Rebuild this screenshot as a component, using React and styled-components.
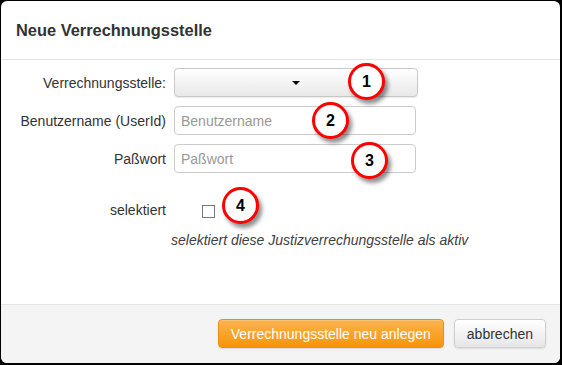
import React from 'react'
import styled, { createGlobalStyle } from 'styled-components'

const GlobalStyle = createGlobalStyle`
  html, body {
    margin: 0;
    padding: 0;
    background: #000;
  }
  * {
    box-sizing: border-box;
  }
`;

const CALLOUTS = [
  { n: '1', left: 347, top: 62 },
  { n: '2', left: 311, top: 101 },
  { n: '3', left: 350, top: 141 },
  { n: '4', left: 221, top: 186 },
];

export default function App() {
  return (
    <>
      <GlobalStyle />
      <Dialog>
        <Header>
          <Title>Neue Verrechnungsstelle</Title>
        </Header>

        <Body>
          <Form>
            <FormRow>
              <Label>Verrechnungsstelle:</Label>
              <SelectButton type="button">
                <Caret />
              </SelectButton>
            </FormRow>
            <FormRow>
              <Label>Benutzername (UserId)</Label>
              <TextInput placeholder="Benutzername" />
            </FormRow>
            <FormRow>
              <Label>Paßwort</Label>
              <TextInput placeholder="Paßwort" type="text" />
            </FormRow>
            <CheckRow>
              <Label>selektiert</Label>
              <Checkbox type="checkbox" />
            </CheckRow>
            <HelpRow>
              <span />
              <HelpText>selektiert diese Justizverrechungsstelle als aktiv</HelpText>
            </HelpRow>
          </Form>
        </Body>

        <Footer>
          <Button $primary>Verrechnungsstelle neu anlegen</Button>
          <Button>abbrechen</Button>
        </Footer>

        {CALLOUTS.map((c) => (
          <Callout key={c.n} style={{ left: c.left, top: c.top }}>
            {c.n}
          </Callout>
        ))}
      </Dialog>
    </>
  )
}

const Dialog = styled.div`
width: 559px;
height: 362px;
margin: 1px 2px 2px 1px;
background: #fff;
border-radius: 6px;
overflow: hidden;
position: relative;
display: flex;
flex-direction: column;
font-family: "Liberation Sans", Arial, sans-serif;
color: #333;
`;

const Header = styled.div`
height: 59px;
flex-shrink: 0;
display: flex;
align-items: center;
padding: 0 15px;
border-bottom: 1px solid #e5e5e5;
`;

const Title = styled.h3`
margin: 0;
font-size: 16.4px;
font-weight: bold;
color: #333;
`;

const Body = styled.div`
flex: 1;
padding: 8px 15px 0 15px;
`;

const Form = styled.div`
display: flex;
flex-direction: column;
gap: 9px;
`;

const FormRow = styled.div`
display: grid;
grid-template-columns: 150px 244px;
column-gap: 8px;
align-items: center;
height: 29px;
`;

const Label = styled.label`
text-align: right;
font-size: 14px;
color: #333;
`;

const SelectButton = styled.button`
height: 29px;
width: 244px;
border: 1px solid #c8c8c8;
border-radius: 4px;
background: linear-gradient(to bottom, #ffffff, #e8e8e8);
box-shadow: inset 0 1px 0 rgba(255,255,255,0.3), 0 1px 1px rgba(0,0,0,0.08);
display: flex;
align-items: center;
justify-content: center;
padding: 0;
`;

const Caret = styled.span`
width: 0;
height: 0;
border-left: 4px solid transparent;
border-right: 4px solid transparent;
border-top: 4px solid #000;
`;

const TextInput = styled.input`
height: 29px;
width: 242px;
border: 1px solid #ccc;
border-radius: 4px;
padding: 0 6px;
font-family: "Liberation Sans", Arial, sans-serif;
font-size: 14px;
color: #555;
outline: none;
&::placeholder {
  color: #999;
}
`;

const CheckRow = styled.div`
display: grid;
grid-template-columns: 150px 244px;
column-gap: 8px;
align-items: center;
height: 20px;
margin-top: 18px;
`;

const Checkbox = styled.input`
appearance: none;
margin: 0 0 0 28px;
width: 13px;
height: 13px;
border: 1px solid #777;
background: #fff;
position: relative;
top: 1px;
`;

const HelpRow = styled.div`
display: grid;
grid-template-columns: 150px 300px;
column-gap: 5px;
margin-top: 3px;
`;

const HelpText = styled.span`
font-size: 14px;
font-style: italic;
color: #404040;
line-height: 17px;
white-space: nowrap;
`;

const Footer = styled.div`
height: 59px;
flex-shrink: 0;
border-top: 1px solid #e5e5e5;
background: #f4f4f4;
display: flex;
justify-content: flex-end;
align-items: flex-start;
gap: 10px;
padding: 14px 14px 0 0;
`;

const Button = styled.button`
height: 29px;
padding: 0 12px;
border-radius: 4px;
font-family: "Liberation Sans", Arial, sans-serif;
font-size: 14px;
color: ${(p) => (p.$primary ? '#fff' : '#333')};
border: 1px solid ${(p) => (p.$primary ? '#e8901a' : '#cfcfcf')};
background: ${(p) =>
  p.$primary
    ? 'linear-gradient(to bottom, #fbb450, #f89406)'
    : 'linear-gradient(to bottom, #ffffff, #e6e6e6)'};
box-shadow: inset 0 1px 0 rgba(255,255,255,0.2), 0 1px 2px rgba(0,0,0,0.1);
`;

const Callout = styled.div`
position: absolute;
width: 37px;
height: 37px;
border-radius: 50%;
border: 3.5px solid #f00;
background: #fff;
box-shadow: 3px 4px 4px rgba(0,0,0,0.45);
display: flex;
align-items: center;
justify-content: center;
font-family: "Liberation Sans", Arial, sans-serif;
font-weight: bold;
font-size: 16px;
color: #000;
`;
